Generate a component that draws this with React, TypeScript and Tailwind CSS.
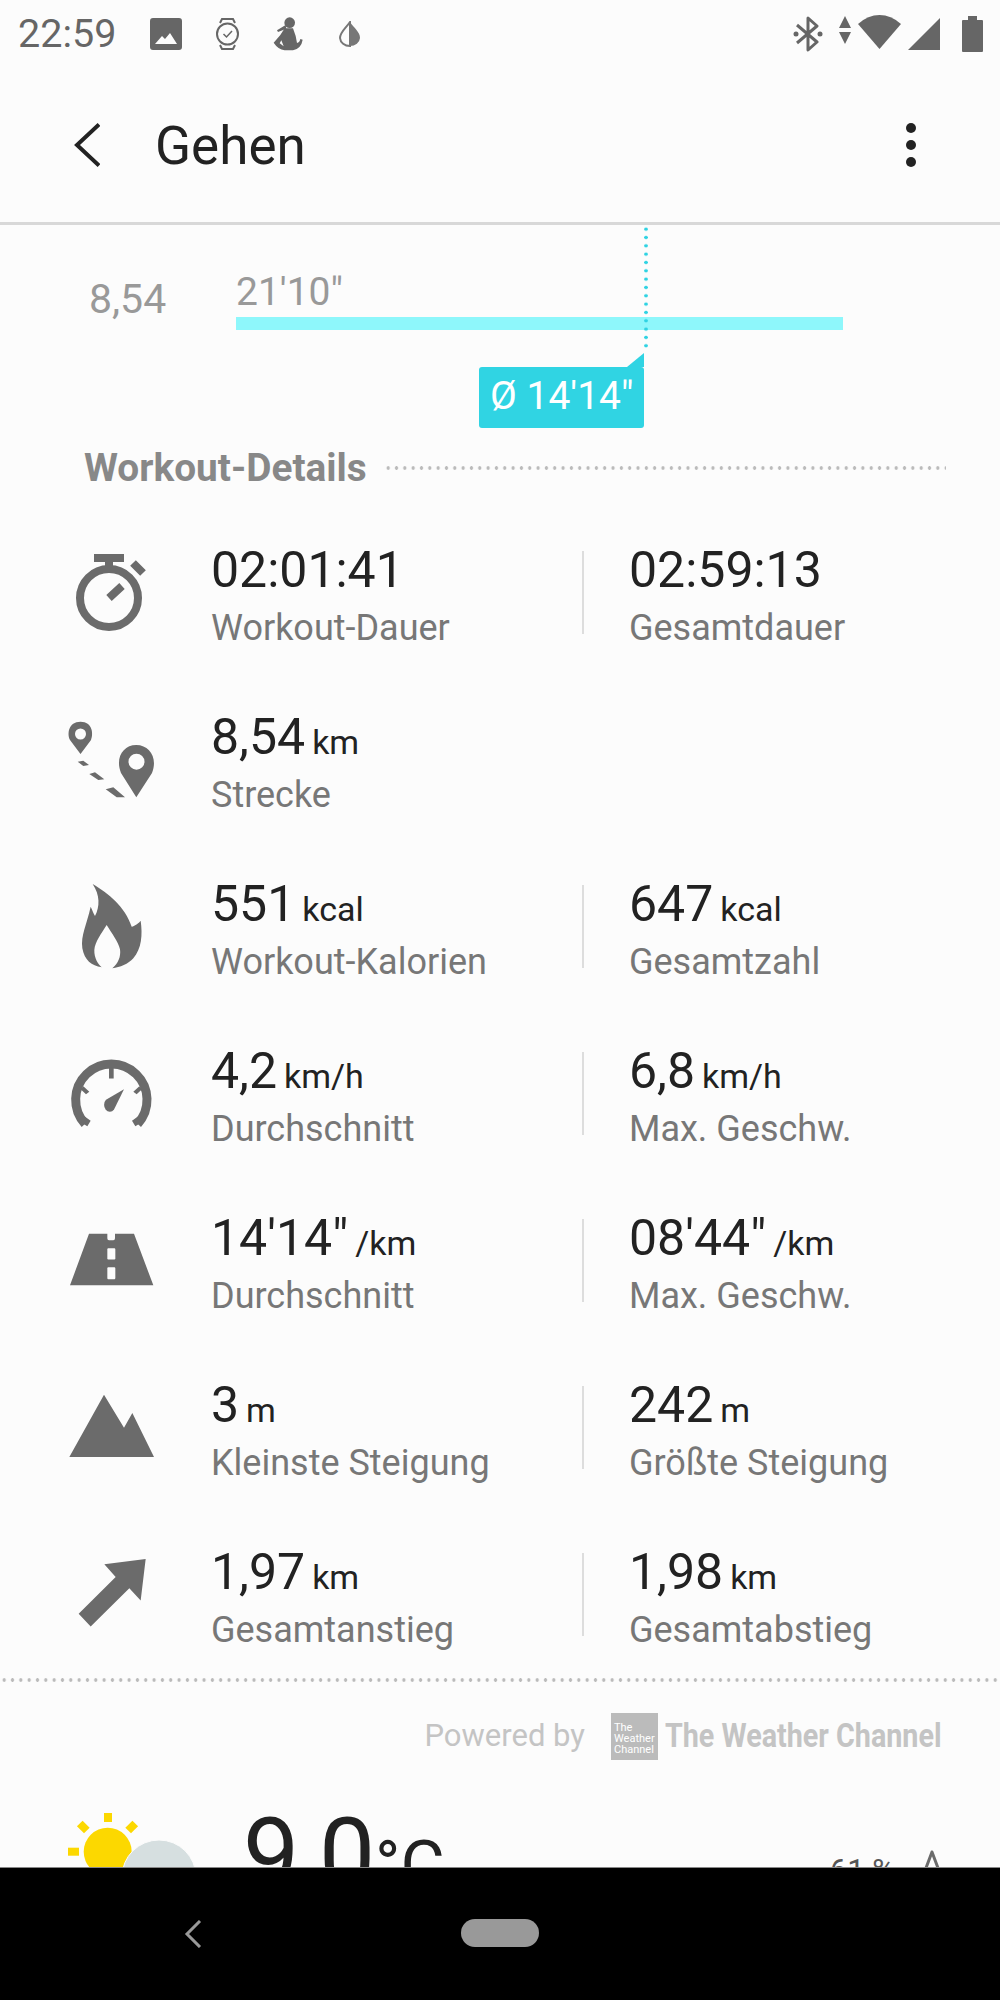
const rows = [
  { icon: "timer", a: { value: "02:01:41", label: "Workout-Dauer" }, b: { value: "02:59:13", label: "Gesamtdauer" } },
  { icon: "route", a: { value: "8,54", unit: "km", label: "Strecke" } },
  { icon: "flame", a: { value: "551", unit: "kcal", label: "Workout-Kalorien" }, b: { value: "647", unit: "kcal", label: "Gesamtzahl" } },
  { icon: "gauge", a: { value: "4,2", unit: "km/h", label: "Durchschnitt" }, b: { value: "6,8", unit: "km/h", label: "Max. Geschw." } },
  { icon: "road", a: { value: "14'14\"", unit: "/km", label: "Durchschnitt" }, b: { value: "08'44\"", unit: "/km", label: "Max. Geschw." } },
  { icon: "mountain", a: { value: "3", unit: "m", label: "Kleinste Steigung" }, b: { value: "242", unit: "m", label: "Größte Steigung" } },
  { icon: "arrow", a: { value: "1,97", unit: "km", label: "Gesamtanstieg" }, b: { value: "1,98", unit: "km", label: "Gesamtabstieg" } },
];

// drawn from the crops, so the viewBoxes are in crop coordinates
function RowIcon({ name }: { name: string }) {
  const cls = "w-[100px] h-[100px] shrink-0 ml-[60px] fill-[#6b6b6b]";
  if (name === "timer")
    return (
      <svg viewBox="0 0 100 100" className={cls}>
        <circle cx="49" cy="49" r="29" fill="none" stroke="#6b6b6b" strokeWidth="8" />
        <rect x="34" y="5" width="30" height="8" />
        <rect x="45" y="12" width="8" height="10" />
        <path d="M73 14 83 24M49 49 62 37" stroke="#6b6b6b" strokeWidth="8" />
      </svg>
    );
  if (name === "route")
    return (
      <svg viewBox="0 0 100 100" className={cls}>
        <path fillRule="evenodd" d="M20.5 38 10 24C7 18 8.300 5.700 20.500 5.700S33.500 18 31 24ZM20.500 12.500a5.500 5.500 0 1 0 0 11 5.500 5.500 0 0 0 0-11Z" />
        <path fillRule="evenodd" d="M76.300 81.300 61 57C55 42 63 29 76.300 29S98 42 92 57ZM76.500 37.700a8 8 0 1 0 0 16 8 8 0 0 0 0-16Z" />
        <path d="M17.700 45.700 23.300 44.700 29 49 23.300 50ZM29.300 58 35 56.300 44.300 63.300 38.300 64ZM45.700 73.300 53.300 71.300 65 81.300 56.700 81.300Z" />
      </svg>
    );
  if (name === "flame")
    return (
      <svg viewBox="30 1059 300 300" className={cls}>
        <path d="M128 1062C175 1090 225 1130 245 1190 255 1188 268 1178 272 1172 278 1215 275 1255 250 1285 235 1302 210 1312 187 1315 205 1300 213 1280 210 1258 205 1235 185 1210 170 1185 155 1210 135 1235 133 1260 132 1285 145 1303 155 1312 125 1308 103 1290 97 1255 92 1215 110 1185 122 1130 128 1142 130 1150 135 1158 150 1130 150 1095 128 1062Z" />
      </svg>
    );
  if (name === "gauge")
    return (
      <svg viewBox="30 42 300 249" preserveAspectRatio="none" className={cls}>
        <path d="M105 226A107 89 0 1 1 263 226" fill="none" stroke="#6b6b6b" strokeWidth="9" vectorEffect="non-scaling-stroke" />
        <rect x="177" y="85" width="14" height="28" />
        <path d="M100 132 118 146 108 152 92 140ZM268 132 250 146 260 152 276 140ZM100 205 122 218 112 232 92 222ZM268 205 246 218 256 232 276 222Z" />
        <path d="M222 140 192 190A17 17 0 1 1 168 166Z" />
      </svg>
    );
  if (name === "road")
    return (
      <svg viewBox="30 465 300 249" preserveAspectRatio="none" className={cls}>
        <path d="M117 507H172V518Q172 523 177 523H190Q195 523 195 518V507H252L310 635H60Z" />
        <rect x="172" y="543" width="24" height="28" rx="3" fill="#fcfcfc" />
        <rect x="172" y="590" width="24" height="30" rx="3" fill="#fcfcfc" />
      </svg>
    );
  if (name === "mountain")
    return (
      <svg viewBox="30 881 300 249" preserveAspectRatio="none" className={cls}>
        <path d="M58 1063 162 908 222 990 247 953 312 1063Z" />
      </svg>
    );
  return (
    <svg viewBox="30 1297 300 249" preserveAspectRatio="none" className={cls}>
      <path d="M287 1317 163 1330 197 1362 86 1453 122 1485 238 1390 272 1420Z" />
    </svg>
  );
}

function Stat({ value, unit, label }: { value: string; unit?: string; label: string }) {
  return (
    <div className="flex flex-col">
      <div className="h-[58px] leading-[58px] text-[#222] text-[50px] whitespace-nowrap">
        {value}
        {unit && <span className="text-[34px] ml-[7px]">{unit}</span>}
      </div>
      <div className="h-[58px] leading-[58px] text-[#777] text-[36px] whitespace-nowrap">{label}</div>
    </div>
  );
}

function StatusBar() {
  return (
    <div className="h-[67px] shrink-0 flex items-center text-[#666]">
      <span className="ml-[18px] w-[132px] text-[39.500px] leading-none">22:59</span>
      <svg viewBox="0 0 32 32" className="w-[32px] h-[32px] fill-[#666]">
        <path fillRule="evenodd" d="M3 0H29Q32 0 32 3V29Q32 32 29 32H3Q0 32 0 29V3Q0 0 3 0ZM5 26H27L20 15 15 21 12 18Z" />
      </svg>
      <svg viewBox="0 0 25 32" className="ml-[33px] w-[25px] h-[32px]" fill="none" stroke="#666">
        <circle cx="12.500" cy="16" r="10.500" strokeWidth="2" />
        <path d="M5 5 7 1H18L20 5M5 27 7 31H18L20 27" strokeWidth="2" />
        <path d="M8.500 16 11.500 19 17 13" strokeWidth="1.500" />
      </svg>
      <svg viewBox="40 15 90 105" className="ml-[33px] w-[30px] h-[35px] fill-[#666]">
        <circle cx="90" cy="35" r="16" />
        <path d="M78 42 52 58 55 63 80 53Z" />
        <path d="M75 52H100L108 75 112 96Q120 95 122 84L129 86Q125 112 100 118H75Q55 115 42 95L62 72Z" />
        <path d="M65 88 60 97 72 106Z" fill="#fcfcfc" />
      </svg>
      <svg viewBox="0 0 22 26" className="ml-[36px] w-[22px] h-[26px]">
        <path d="M11 1C7 7 1 11 1 17A10 8.500 0 0 0 11 25Z" fill="none" stroke="#777" strokeWidth="2" />
        <path d="M11 1C15 7 21 11 21 17A10 8.500 0 0 1 11 25Z" fill="#777" />
      </svg>
      <svg viewBox="0 0 30 36" className="ml-[432px] w-[30px] h-[36px]" fill="none" stroke="#666" strokeWidth="3">
        <path d="M4 9 24 26 15 34V2L24 10 4 27" strokeLinejoin="round" />
        <circle cx="3" cy="18" r="2.500" fill="#666" stroke="none" />
        <circle cx="27" cy="18" r="2.500" fill="#666" stroke="none" />
      </svg>
      <svg viewBox="0 0 12 28" className="ml-[16px] -mt-[7px] w-[12px] h-[28px] fill-[#666]">
        <path d="M6 0 12 12H0ZM6 28 0 16H12Z" />
      </svg>
      <svg viewBox="0 0 43 34" className="ml-[7px] -mt-[3px] w-[43px] h-[34px] fill-[#666]">
        <path d="M21.500 34 0 9Q10 0 21.500 0T43 9Z" />
      </svg>
      <svg viewBox="0 0 32 32" className="ml-[7px] mt-[1px] w-[32px] h-[32px] fill-[#666]">
        <path d="M32 0V32H0Z" />
      </svg>
      <svg viewBox="0 0 21 36" className="ml-[22px] w-[21px] h-[36px] fill-[#666]">
        <path d="M6 0H15V4H20Q21 4 21 5V35Q21 36 20 36H1Q0 36 0 35V5Q0 4 1 4H6Z" />
      </svg>
    </div>
  );
}

export default function App() {
  return (
    <div className="h-[2000px] flex flex-col bg-[#fcfcfc] font-['Roboto',sans-serif]">
      <StatusBar />

      {/* App bar */}
      <div className="h-[155px] shrink-0 flex items-center">
        <svg viewBox="0 0 26 44" className="ml-[74px] w-[26px] h-[44px]" fill="none" stroke="#222" strokeWidth="4">
          <path d="M25 1.500 3 22 25 42.500" />
        </svg>
        <span className="ml-[55px] mt-[4px] text-[#222] text-[53px] leading-none">Gehen</span>
        <div className="ml-auto mr-[84px] flex flex-col gap-[7px]">
          <div className="w-[10px] h-[10px] rounded-full bg-[#222]" />
          <div className="w-[10px] h-[10px] rounded-full bg-[#222]" />
          <div className="w-[10px] h-[10px] rounded-full bg-[#222]" />
        </div>
      </div>
      <div className="h-[3px] shrink-0 bg-[#d8d8d8]" />

      <main className="relative flex-1 overflow-hidden">
        {/* Pace chart */}
        <div className="relative h-[205px] flex pl-[89px]">
          <div className="w-[147px] pt-[52px] text-[#999] text-[41px] leading-[44px]">8,54</div>
          <div className="w-[607px] flex flex-col pt-[45px]">
            <div className="h-[47px] text-[#999] text-[39px] leading-[44px]">21'10"</div>
            <div className="h-[13px] bg-[#8ef7fb]" />
            <div className="relative mt-[37px] ml-[243px] w-[165px] h-[61px] pl-[11px] rounded-[3px] bg-[#30d4e3] text-white text-[39px] leading-[58px] whitespace-nowrap">
              <svg viewBox="0 0 17 14" className="absolute right-0 -top-[14px] w-[17px] h-[14px] fill-[#30d4e3]">
                <path d="M17 0V14H0Z" />
              </svg>
              Ø 14'14"
            </div>
          </div>
          <div className="absolute left-[644px] top-0 w-[4px] h-[125px] bg-[radial-gradient(circle,#2fd3e3_1.500px,transparent_2px)] bg-[length:4px_8.330px]" />
        </div>

        {/* Workout details */}
        <div className="h-[76px] mb-[9px] flex items-center pl-[84px] pr-[54px] gap-[17px]">
          <span className="text-[#888] text-[38.800px] font-bold whitespace-nowrap">Workout-Details</span>
          <div className="flex-1 h-[4px] bg-[radial-gradient(circle,#bbb_1.500px,transparent_2px)] bg-[length:8.330px_4px]" />
        </div>
        {rows.map((r) => (
          <div key={r.icon} className="h-[167px] flex items-center">
            <RowIcon name={r.icon} />
            <div className="w-[371px] ml-[51px]">
              <Stat {...r.a} />
            </div>
            {r.b && (
              <>
                <div className="w-[2px] h-[83px] -mt-[12px] bg-[#ddd]" />
                <div className="ml-[45px]">
                  <Stat {...r.b} />
                </div>
              </>
            )}
          </div>
        ))}

        <div className="-mt-[6px] h-[4px] bg-[radial-gradient(circle,#bbb_1.500px,transparent_2px)] bg-[length:8.330px_4px]" />

        {/* Weather */}
        <div className="h-[108px] flex items-center justify-end pr-[57px]">
          <span className="text-[#c4c4c4] text-[31px] mr-[26px]">Powered by</span>
          <div className="w-[47px] h-[47px] bg-[#bbb] text-white text-[11px] leading-[10.800px] flex flex-col justify-end pl-[3px] pb-[4px]">
            <span>The</span>
            <span>Weather</span>
            <span>Channel</span>
          </div>
          <span className="w-[278px] ml-[7px] text-[#c4c4c4] text-[33px] font-bold whitespace-nowrap scale-x-[.87] origin-left">
            The Weather Channel
          </span>
        </div>
        <div className="flex items-start pl-[68px] pr-[57px] pt-[23px]">
          <svg viewBox="0 0 130 110" className="w-[130px] h-[110px] shrink-0 fill-[#fcd800]">
            <circle cx="39.700" cy="38.700" r="24" />
            <rect x="36" y="0" width="8" height="9" />
            <rect x="11.300" y="9" width="8" height="10" transform="rotate(-45 15.300 14)" />
            <rect x="59.700" y="9" width="8" height="10" transform="rotate(45 63.700 14)" />
            <rect x="0" y="34.700" width="11" height="8" />
            <circle cx="91" cy="64" r="37" fill="#d6dfe0" stroke="#fcfcfc" strokeWidth="1" />
          </svg>
          <div className="ml-[45px] -mt-[8px] flex items-baseline text-[#222] leading-none">
            <span className="text-[100px]">9,0</span>
            <span className="text-[68px]">°C</span>
          </div>
          <div className="ml-auto flex items-start pt-[42px]">
            <span className="text-[#555] text-[31px] leading-none whitespace-nowrap">61 %</span>
            <svg viewBox="0 0 22 30" className="ml-[26px] -mt-[5px] w-[22px] h-[30px]" fill="none" stroke="#6b6b6b" strokeWidth="3" strokeLinejoin="round">
              <path d="M11 2 2 26H20Z" />
            </svg>
          </div>
        </div>
      </main>

      {/* Navigation bar */}
      <div className="h-[133px] shrink-0 bg-black border-t border-[#888] relative flex items-start justify-center pt-[51px]">
        <svg viewBox="0 0 18 28" className="absolute left-[184px] top-[52px] w-[18px] h-[28px]" fill="none" stroke="#999" strokeWidth="3">
          <path d="M16 1 3 14 16 27" />
        </svg>
        <div className="w-[78px] h-[28px] rounded-[14px] bg-[#999]" />
      </div>
    </div>
  );
}
